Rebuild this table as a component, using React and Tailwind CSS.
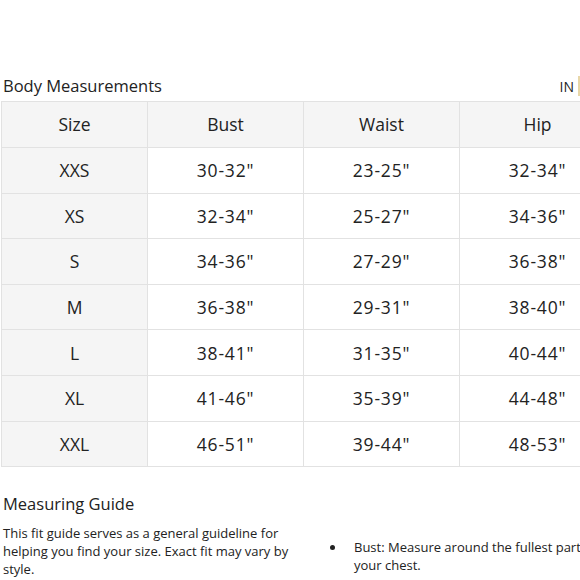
import React from 'react';

const rows = [
  ['XXS', '30-32"', '23-25"', '32-34"'],
  ['XS', '32-34"', '25-27"', '34-36"'],
  ['S', '34-36"', '27-29"', '36-38"'],
  ['M', '36-38"', '29-31"', '38-40"'],
  ['L', '38-41"', '31-35"', '40-44"'],
  ['XL', '41-46"', '35-39"', '44-48"'],
  ['XXL', '46-51"', '39-44"', '48-53"'],
];

const font = { fontFamily: '"Open Sans", "Noto Sans", sans-serif' };

const App = () => {
  return (
    <div className="w-[580px] h-[580px] overflow-hidden bg-white text-[#222]" style={font}>
      <div className="w-[680px] pl-px pt-[74px]">
        {/* Header */}
        <div className="flex items-center justify-between w-[579px] h-[24px] mb-[3px]">
          <h2 className="text-[16.5px] leading-[24px] pl-[2px]">Body Measurements</h2>
          <div className="flex items-center h-[24px]">
            <span className="text-[14px] pr-[4px]">IN</span>
            <span className="w-[2px] h-[20px] bg-[#e8d7a8]"></span>
          </div>
        </div>

        {/* Table */}
        <table className="border-collapse text-[17.5px]">
          <thead>
            <tr className="h-[46px] bg-[#f5f5f5]">
              <th className="w-[146px] border border-[#e2e2e2] font-normal">Size</th>
              <th className="w-[156px] border border-[#e2e2e2] font-normal">Bust</th>
              <th className="w-[156px] border border-[#e2e2e2] font-normal">Waist</th>
              <th className="w-[156px] border border-[#e2e2e2] font-normal">Hip</th>
            </tr>
          </thead>
          <tbody>
            {rows.map((r) => (
              <tr key={r[0]} className="h-[45.6px]">
                <td className="bg-[#f5f5f5] border border-[#e2e2e2] text-center">{r[0]}</td>
                <td className="border border-[#e2e2e2] text-center tracking-[0.8px]">{r[1]}</td>
                <td className="border border-[#e2e2e2] text-center tracking-[0.8px]">{r[2]}</td>
                <td className="border border-[#e2e2e2] text-center tracking-[0.8px]">{r[3]}</td>
              </tr>
            ))}
          </tbody>
        </table>

        {/* Guide */}
        <h3 className="text-[16.5px] leading-[24px] pl-[2px] mt-[25px]">Measuring Guide</h3>
        <div className="flex mt-[8px]">
          <p className="w-[300px] text-[13px] leading-[18px] pl-[2px]">
            This fit guide serves as a general guideline for helping you find your size. Exact fit may vary by style.
          </p>
          <ul className="list-disc pl-[45px] mt-[14px] text-[13px] leading-[18px] w-[300px]">
            <li className="pl-[8px]">Bust: Measure around the fullest part of your chest.</li>
          </ul>
        </div>
      </div>
    </div>
  );
};

export default App;
